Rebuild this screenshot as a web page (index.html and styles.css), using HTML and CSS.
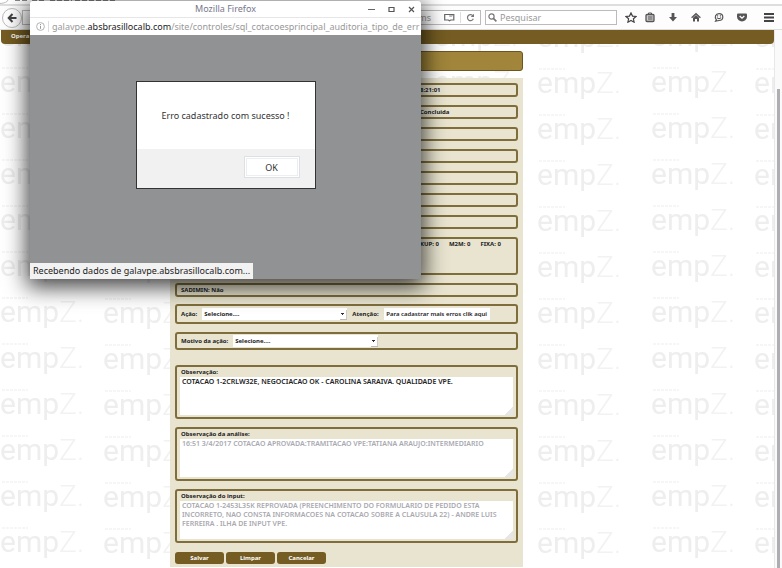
FILE: index.html
```html
<!DOCTYPE html>
<html lang="pt-BR">
<head>
<meta charset="utf-8">
<title>Auditoria</title>
<link rel="stylesheet" href="styles.css">
</head>
<body>
<header class="browser">
  <div class="tabstrip">
    <svg class="tab-edge" width="120" height="4" viewBox="0 0 120 4" aria-hidden="true"><path d="M0 3.5Q7 3 8 0" fill="none" stroke="#bbb"/><path d="M15 .5h13M32 .5h13M50 .5h22M75 .5h40" stroke="#888" stroke-dasharray="5 2"/></svg>
  </div>
  <div class="toolbar">
    <button class="back" type="button" aria-label="Voltar"><svg width="10" height="10" viewBox="0 0 10 10"><path d="M5.5 1 1.7 5l3.8 4M2 5h7.5" fill="none" stroke="#444" stroke-width="2"/></svg></button>
    <div class="field address">
      <input type="text" value="ms" aria-label="Endereço">
      <svg width="11" height="9" viewBox="0 0 11 9"><path d="M.7 1.5h9.100v5.500H6.700l-1.200.7-1.200-.7H.7z" fill="none" stroke="#666" stroke-width="1.200"/><path d="M5.200 2.500h4M5.200 3.500h3" stroke="#aaa" stroke-width=".8"/></svg>
      <span class="rule"></span>
      <svg width="9" height="9" viewBox="0 0 9 9"><path d="M7 3A3 3 0 1 0 7.3 5.7" fill="none" stroke="#777" stroke-width="1.2"/><path d="M8 .7v3.4H4.7z" fill="#777"/></svg>
    </div>
    <div class="field search">
      <svg width="9" height="9" viewBox="0 0 9 9"><circle cx="3.5" cy="3.5" r="2.6" fill="none" stroke="#777" stroke-width="1.2"/><path d="m5.4 5.4 3 3" stroke="#777" stroke-width="1.6"/></svg>
      <input type="text" value="Pesquisar" aria-label="Pesquisar">
    </div>
    <nav class="tools" aria-label="Ferramentas">
      <button type="button" aria-label="Favoritar"><svg width="12" height="11" viewBox="0 0 12 11"><path d="m6 .9 1.5 3.2 3.5.4-2.6 2.3.7 3.4L6 8.500 2.900 10.200l.7-3.400L1 4.500l3.500-.4z" fill="none" stroke="#444" stroke-width="1.200"/></svg></button>
      <button type="button" aria-label="Lista"><svg width="10" height="11" viewBox="0 0 10 11"><rect x="1" y="2.500" width="8" height="7" rx="1" fill="#ccc" stroke="#555" stroke-width="1.300"/><path d="M3.500 2.200V1h3v1.200M3 5h4.500M3 7h4.500" fill="none" stroke="#555"/></svg></button>
      <button type="button" aria-label="Downloads"><svg width="10" height="11" viewBox="0 0 10 11"><path d="M3.600 1h2.800v4H9L5 9.500 1 5h2.600z" fill="#555"/></svg></button>
      <button type="button" aria-label="Início"><svg width="10" height="11" viewBox="0 0 10 11"><path d="m.6 5.700 4.400-4 4.400 4" fill="none" stroke="#555" stroke-width="1.300"/><path d="M2 5.800 5 3l3 2.800V9.500H6V7H4v2.500H2z" fill="#555"/></svg></button>
      <button type="button" aria-label="Conversa"><svg width="10" height="11" viewBox="0 0 10 11"><path d="M5 1.600c2.400 0 3.800 1.400 3.800 3.400S7.400 8.500 5 8.500l-3.400.6.800-1.300C.2 5.500 1.500 1.600 5 1.600z" fill="none" stroke="#555" stroke-width="1.200"/><path d="M3.600 3.300v1.200M6.400 3.300v1.200M3 5.500c1 1.500 3 1.500 4 0" fill="none" stroke="#555" stroke-width="1.100"/></svg></button>
      <button type="button" aria-label="Pocket"><svg width="10" height="11" viewBox="0 0 10 11"><path d="M1 1.500h8q1 0 1 1V4.500a5 5 0 0 1-10 0v-2q0-1 1-1z" fill="#555"/><path d="m2.700 4 2.300 2.200L7.300 4" fill="none" stroke="#fff" stroke-width="1.300"/></svg></button>
      <button type="button" aria-label="Menu"><svg width="10" height="11" viewBox="0 0 10 11"><path d="M0 2h10M0 5.500h10M0 9h10" stroke="#444" stroke-width="1.800"/></svg></button>
    </nav>
  </div>
</header>
<div class="viewport">
  <div class="page">
    <svg class="watermark" width="100%" height="100%" aria-hidden="true">
      <defs>
        <pattern id="mark" width="217" height="46" patternUnits="userSpaceOnUse" y="30">
          <g class="mark-text">
            <text x="0" y="32">emp<tspan class="mark-z">Z.</tspan></text>
            <text x="103" y="33">emp<tspan class="mark-z">Z.</tspan></text>
          </g>
          <path d="M2 8h26M105 9h26" stroke="#f6f6f6" stroke-width="2" stroke-dasharray="3 1"/>
        </pattern>
      </defs>
      <rect width="100%" height="100%" fill="url(#mark)"/>
    </svg>
    <nav class="menubar"><a href="#">Opera</a></nav>
    <main class="content">
      <div class="title"></div>
      <form class="panel">
        <div class="row"><span class="value">8:21:01</span></div>
        <div class="row"><span class="value">Concluida</span></div>
        <div class="row"></div>
        <div class="row"></div>
        <div class="row"></div>
        <div class="row"></div>
        <div class="row"></div>
        <div class="row tall"><span class="value">KUP: 0</span><span>M2M: 0</span><span>FIXA: 0</span></div>
        <div class="row flag">SADIMIN: Não</div>
        <div class="row line">
          <label for="acao">Ação:</label>
          <select id="acao"><option>Selecione....</option></select>
          <span class="attention">Atenção:</span>
          <button class="more" type="button">Para cadastrar mais erros clik aqui</button>
        </div>
        <div class="row line reason">
          <label for="motivo">Motivo da ação:</label>
          <select id="motivo"><option>Selecione....</option></select>
        </div>
        <div class="row note">
          <label for="obs">Observação:</label>
          <textarea id="obs">COTACAO 1-2CRLW32E, NEGOCIACAO OK - CAROLINA SARAIVA. QUALIDADE VPE.</textarea>
        </div>
        <div class="row note">
          <label for="analise">Observação da análise:</label>
          <textarea id="analise" class="muted" readonly>16:51 3/4/2017 COTACAO APROVADA:TRAMITACAO VPE:TATIANA ARAUJO:INTERMEDIARIO</textarea>
        </div>
        <div class="row note">
          <label for="input">Observação do input:</label>
          <textarea id="input" class="muted" readonly>COTACAO 1-2453L35K REPROVADA (PREENCHIMENTO DO FORMULARIO DE PEDIDO ESTA INCORRETO, NAO CONSTA INFORMACOES NA COTACAO SOBRE A CLAUSULA 22) - ANDRE LUIS FERREIRA . ILHA DE INPUT VPE.</textarea>
        </div>
        <div class="actions">
          <button type="button">Salvar</button>
          <button type="button">Limpar</button>
          <button type="button">Cancelar</button>
        </div>
      </form>
    </main>
  </div>
  <div class="scrollbar"><div class="thumb"></div></div>
</div>
<section class="popup" aria-label="Mozilla Firefox">
  <div class="popup-title">
    <span>Mozilla Firefox</span>
    <div class="window-buttons">
      <button type="button" aria-label="Minimizar"><svg width="7" height="7" viewBox="0 0 7 7"><path d="M0 3.500h7" stroke="#666"/></svg></button>
      <button type="button" aria-label="Maximizar"><svg width="7" height="7" viewBox="0 0 7 7"><path d="M1 1.500h5v4H1z" fill="none" stroke="#555" stroke-width="1.200"/></svg></button>
      <button type="button" aria-label="Fechar"><svg width="7" height="7" viewBox="0 0 7 7"><path d="m1 1 5 5M6 1 1 6" stroke="#555" stroke-width="1.200"/></svg></button>
    </div>
  </div>
  <div class="popup-url">
    <svg width="9" height="9" viewBox="0 0 9 9"><circle cx="4.500" cy="4.500" r="3.900" fill="none" stroke="#aaa" stroke-width=".9"/><path d="M4.500 4v2.800M4.500 2v1.200" stroke="#999"/></svg>
    <span class="rule"></span>
    <span class="url">galavpe.<b>absbrasillocalb.com</b>/site/controles/sql_cotacoesprincipal_auditoria_tipo_de_err</span>
  </div>
  <div class="popup-body">
    <div class="dialog" role="alertdialog" aria-labelledby="message">
      <p id="message">Erro cadastrado com sucesso !</p>
      <div class="dialog-foot"><button type="button">OK</button></div>
    </div>
    <div class="status">Recebendo dados de galavpe.absbrasillocalb.com...</div>
  </div>
</section>
</body>
</html>
```
FILE: styles.css
```css
* { box-sizing: border-box; }
body {
  margin: 0;
  min-height: 100vh;
  display: flex;
  flex-direction: column;
  overflow: hidden;
  background: #fff;
  color: #222;
  font-family: "Noto Sans", sans-serif;
  font-size: 9px;
}
button, input, select, textarea { font: inherit; color: inherit; margin: 0; padding: 0; border: 0; border-radius: 0; }
button { background: none; }
svg { display: block; flex: none; }

.tabstrip { height: 6px; border-bottom: 2px solid #dedede; }
.toolbar { height: 24px; display: flex; align-items: center; padding: 0 8px 0 2px; background: #fdfdfd; border-bottom: 1px solid #ddd; }
.back { width: 20px; height: 20px; display: grid; place-items: center; border: 1px solid #bbb; border-radius: 50%; background: #fff; }
.field { height: 15px; display: flex; align-items: center; border: 1px solid #bbb; background: #fff; color: #999; }
.field input { min-width: 0; background: none; outline: 0; }
.address { flex: 1; margin-right: 4px; padding-right: 5px; }
.address input { flex: 1; text-align: right; margin-right: 13px; }
.rule { width: 1px; height: 11px; margin: 0 5px; background: #ddd; }
.search { width: 132px; padding: 0 2px; gap: 3px; }
.search input { flex: 1; }
.tools { display: flex; gap: 13px; margin-left: 8px; }
.tools button:first-child { margin-right: -5px; }
.tools button:last-child { margin-left: 4px; }

.viewport { flex: 1; display: flex; }
.page { flex: 1; position: relative; padding-left: 1px; }
.watermark { position: absolute; inset: 0; }
.mark-text { font: 400 30px Roboto, sans-serif; fill: #eee; }
.mark-z { font-weight: 300; fill: #f2f2f2; }
.menubar { position: relative; height: 14px; padding-left: 10px; border-radius: 0 0 4px 4px; background: #745c22; font-weight: 700; font-size: 6px; line-height: 12px; }
.menubar a { color: #fff; text-decoration: none; }
.scrollbar { width: 8px; padding: 59px 2px 0 0; border-left: 1px solid #e8e8e8; background: #fafafa; display: flex; justify-content: flex-end; }
.thumb { width: 3px; background: #aeaeb2; }

.content { position: relative; margin: 7px 0 0 169px; max-width: 353px; }
.title { height: 20px; margin-bottom: 7px; border: 1px solid #6d5522; border-radius: 3px; background: #a0853a; }
.panel { padding: 5px 5px 3px; background: #e8e4d0; font-weight: 700; font-size: 6px; line-height: 10px; }
.row { min-height: 14px; display: flex; margin-bottom: 8px; padding: 0 4px; border: 2px solid #7f6e3c; border-radius: 3px; }
.row .value { margin-left: 239px; }
.tall { min-height: 38px; gap: 10px; }
.flag { margin-bottom: 7px; }
.line { min-height: 20px; align-items: center; gap: 5px; }
.line select {
  appearance: none;
  width: 145px;
  height: 12px;
  padding: 0 2px;
  background:
    linear-gradient(#333, #333) right 3px top 5px / 3px 1px no-repeat,
    linear-gradient(#333, #333) right 4px top 6px / 1px 1px no-repeat,
    linear-gradient(#bbb, #bbb) right bottom / 7px 1px no-repeat,
    linear-gradient(#ccc, #ccc) right bottom / 1px 10px no-repeat,
    #fff;
}
.more { width: 106px; height: 12px; background: #fff; font-weight: 600; }
.reason { min-height: 18px; margin-bottom: 15px; }
.note { display: block; padding: 0 3px; height: 54px; }
.note label { display: block; height: 10px; padding-left: 1px; }
.note textarea {
  display: block;
  width: 100%;
  height: 38px;
  padding: 0 2px;
  resize: none;
  background: linear-gradient(135deg, #fff 50%, #e6e6e6 50%) right bottom / 8px 8px no-repeat, #fff;
  font-size: 7px;
  font-weight: 600;
  line-height: 9px;
  overflow: hidden;
  outline: 0;
}
.note .muted { color: #a9a9af; }
.actions { display: flex; gap: 2px; padding-top: 1px; }
.actions button { width: 49px; height: 12px; border-radius: 3px; background: #745c22; color: #fff; }

.popup { position: absolute; top: 1px; left: 30px; width: 50%; background: #fff; box-shadow: 0 5px 22px 3px rgba(0, 0, 0, .75); border-radius: 3px 3px 0 0; }
.popup-title { position: relative; height: 17px; line-height: 16px; text-align: center; color: #77778c; border-bottom: 1px solid #e6e6e6; }
.window-buttons { position: absolute; right: 6px; top: 5px; display: flex; gap: 13px; }
.popup-url { height: 17px; display: flex; align-items: center; padding-left: 6px; color: #999; overflow: hidden; white-space: nowrap; }
.popup-url .rule { flex: none; margin: 0 3px; }
.popup-url b { font-weight: 400; color: #222; }
.popup-body { min-height: 244px; padding-top: 46px; display: flex; flex-direction: column; align-items: center; background: #919294; }
.dialog { width: 180px; border: 1px solid #333; background: #fff; color: #333; }
.dialog p { margin: 0; padding: 27px 0; line-height: 13px; text-align: center; }
.dialog-foot { height: 39px; padding: 7px 15px; display: flex; justify-content: flex-end; background: #f1f1f1; }
.dialog-foot button { width: 56px; height: 22px; border: 1px solid #dde1e6; background: #fff; box-shadow: inset 0 0 0 1px #fff, inset 0 0 0 2px #eceff2; }
.status { margin-top: auto; align-self: flex-start; height: 16px; padding: 0 3px; line-height: 16px; background: #f2f2f2; }
```
